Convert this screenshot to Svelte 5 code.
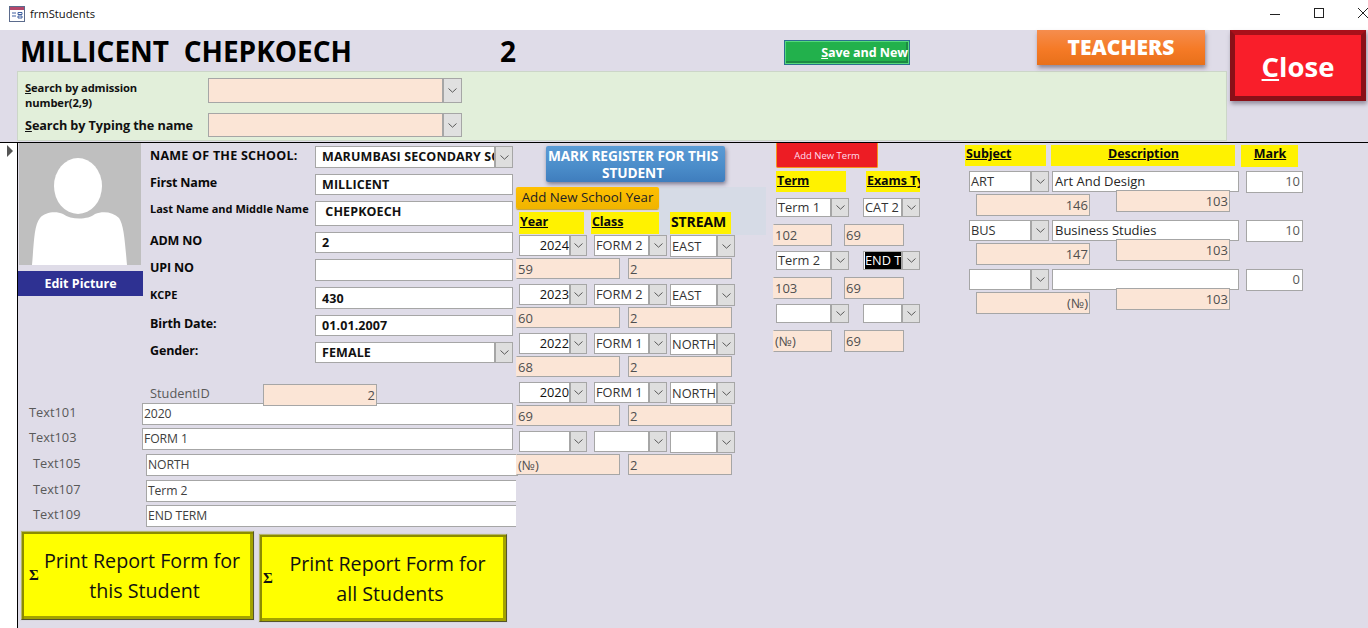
<script>
  const box = (x, y, w, h) => `left:${x}px;top:${y - 143}px;width:${w}px;height:${h}px`;

  const labels = [
    { t: 'NAME OF THE SCHOOL:', x: 150, y: 146, c: 'lb cap' },
    { t: 'First Name', x: 150, y: 173, c: 'lb' },
    { t: 'Last Name and Middle Name', x: 150, y: 199, c: 'lb sm' },
    { t: 'ADM NO', x: 150, y: 231, c: 'lb' },
    { t: 'UPI NO', x: 150, y: 258, c: 'lb' },
    { t: 'KCPE', x: 150, y: 285, c: 'lb sm' },
    { t: 'Birth Date:', x: 150, y: 314, c: 'lb' },
    { t: 'Gender:', x: 150, y: 341, c: 'lb' },
    { t: 'StudentID', x: 150, y: 383, c: 'gl' },
    { t: 'Text101', x: 29, y: 402, c: 'gl' },
    { t: 'Text103', x: 29, y: 427, c: 'gl' },
    { t: 'Text105', x: 33, y: 453, c: 'gl' },
    { t: 'Text107', x: 33, y: 479, c: 'gl' },
    { t: 'Text109', x: 33, y: 504, c: 'gl' }
  ];

  const whites = [
    { t: 'MILLICENT', x: 315, y: 174, w: 198, h: 21, c: 'strong' },
    { t: '\u00a0CHEPKOECH', x: 315, y: 201, w: 198, h: 25, c: 'strong top' },
    { t: '2', x: 315, y: 232, w: 198, h: 21, c: 'strong' },
    { t: '', x: 315, y: 259, w: 198, h: 22, c: 'strong' },
    { t: '430', x: 315, y: 287, w: 198, h: 22, c: 'strong' },
    { t: '01.01.2007', x: 315, y: 315, w: 198, h: 21, c: 'strong' },
    { t: '2020', x: 142, y: 403, w: 371, h: 22, c: 'dim' },
    { t: 'FORM 1', x: 142, y: 428, w: 371, h: 22, c: 'dim' },
    { t: 'NORTH', x: 146, y: 454, w: 372, h: 22, c: 'dim' },
    { t: 'Term 2', x: 146, y: 480, w: 370, h: 22, c: 'dim open' },
    { t: 'END TERM', x: 146, y: 505, w: 370, h: 22, c: 'dim open' },
    { t: 'Art And Design', x: 1052, y: 171, w: 187, h: 21, c: 'dark' },
    { t: 'Business Studies', x: 1052, y: 220, w: 187, h: 21, c: 'dark' },
    { t: '', x: 1052, y: 269, w: 187, h: 21, c: 'dark' },
    { t: '10', x: 1246, y: 171, w: 57, h: 22, c: 'dark right' },
    { t: '10', x: 1246, y: 220, w: 57, h: 22, c: 'dark right' },
    { t: '0', x: 1246, y: 269, w: 57, h: 22, c: 'dark right' }
  ];

  const yearRows = [
    { y: 235, year: '2024', cls: 'FORM 2', st: 'EAST', id: '59' },
    { y: 284, year: '2023', cls: 'FORM 2', st: 'EAST', id: '60' },
    { y: 333, year: '2022', cls: 'FORM 1', st: 'NORTH', id: '68' },
    { y: 382, year: '2020', cls: 'FORM 1', st: 'NORTH', id: '69' },
    { y: 431, year: '', cls: '', st: '', id: '(№)' }
  ];

  const termRows = [
    { y: 198, term: 'Term 1', exam: 'CAT 2', id: '102', sel: false },
    { y: 251, term: 'Term 2', exam: 'END T', id: '103', sel: true },
    { y: 304, term: '', exam: '', id: '(№)', sel: false }
  ];

  const subjectRows = [
    { y: 171, s: 'ART', id: '146' },
    { y: 220, s: 'BUS', id: '147' },
    { y: 269, s: '', id: '(№)' }
  ];

  const heads = [
    { t: 'Year', x: 519, y: 212, w: 65, h: 22 },
    { t: 'Class', x: 591, y: 212, w: 68, h: 22 },
    { t: 'STREAM', x: 670, y: 212, w: 61, h: 22, plain: true },
    { t: 'Term', x: 776, y: 171, w: 70, h: 21 },
    { t: 'Exams Ty', x: 866, y: 171, w: 54, h: 21 },
    { t: 'Subject ', x: 965, y: 145, w: 81, h: 21, up: true },
    { t: 'Description', x: 1051, y: 145, w: 184, h: 21, center: true, up: true },
    { t: 'Mark', x: 1241, y: 145, w: 57, h: 22, center: true, up: true }
  ];
</script>

{#snippet chevron()}
  <svg width="9" height="5" viewBox="0 0 9 5" aria-hidden="true"><path d="M0.5 0.5 L4.5 4.2 L8.5 0.5" fill="none" stroke="#595959" stroke-width="1"/></svg>
{/snippet}

{#snippet combo(x, y, w, h, text, extra = '', btn = 18)}
  <div class="combo {extra}" style={box(x, y, w, h)}>
    <span class="combo-text">{text}</span>
    <span class="combo-btn" style="width:{btn}px">{@render chevron()}</span>
  </div>
{/snippet}

{#snippet peach(x, y, w, h, text, right = false, noleft = false)}
  <div class="peach" class:right class:noleft style={box(x, y, w, h)}>{text}</div>
{/snippet}

<div class="window">
  <header class="titlebar">
    <svg class="appicon" width="17" height="16" viewBox="0 0 17 16" aria-hidden="true">
      <rect x="0.5" y="0.5" width="15" height="15" fill="#fff" stroke="#5b6b8c"/>
      <rect x="1" y="1" width="14" height="3" fill="#b4476b"/>
      <path d="M3 7h4M3 10h4M9 6.5h4v2h-4zM9 10h4v2h-4z" fill="none" stroke="#3f5f9f"/>
    </svg>
    <span class="wintitle">frmStudents</span>
    <div class="winctl">
      <svg width="12" height="12" viewBox="0 0 12 12" aria-hidden="true"><path d="M1 7.5h10" stroke="#222" fill="none"/></svg>
      <svg width="12" height="12" viewBox="0 0 12 12" aria-hidden="true"><rect x="1.5" y="1.5" width="9" height="9" stroke="#222" fill="none"/></svg>
      <svg width="12" height="12" viewBox="0 0 12 12" aria-hidden="true"><path d="M1 1l10 10M11 1L1 11" stroke="#222" fill="none"/></svg>
    </div>
  </header>

  <section class="formhead">
    <div class="titlerow">
      <span class="student">MILLICENT&nbsp; CHEPKOECH</span>
      <span class="studentno">2</span>
    </div>
    <div class="searchpanel">
      <label class="s1" for="a"><u>S</u>earch by admission number(2,9)</label>
      <div id="a" class="searchcombo"><span></span><i>{@render chevron()}</i></div>
      <label class="s2" for="b"><u>S</u>earch by Typing the name</label>
      <div id="b" class="searchcombo"><span></span><i>{@render chevron()}</i></div>
    </div>
    <button class="save"><u>S</u>ave and New</button>
    <button class="teachers">TEACHERS</button>
    <button class="close"><u>C</u>lose</button>
  </section>

  <section class="detail">
    <div class="selector"><span class="tri"></span></div>
    <div class="canvas">
      <svg class="photo" style={box(19, 143, 122, 122)} viewBox="0 0 122 122" aria-hidden="true">
        <rect width="122" height="122" fill="#bfbfbf"/>
        <ellipse cx="59" cy="43" rx="24" ry="28" fill="#fff"/>
        <path d="M13 122 C15 100 15 82 21 75 C26 69 37 68 44 71 C52 77 69 77 76 71 C84 68 94 69 100 75 C105 82 106 100 108 122 Z" fill="#fff"/>
      </svg>
      <button class="edit" style={box(18, 271, 125, 25)}>Edit Picture</button>

      {#each labels as l}
        <div class={l.c} style={box(l.x, l.y, 170, 20)}>{l.t}</div>
      {/each}

      {@render combo(315, 146, 198, 22, 'MARUMBASI SECONDARY SCHOOL', 'strongc up')}
      {@render combo(315, 342, 198, 21, 'FEMALE', 'strongc')}

      <div class="bluepanel" style={box(659, 187, 107, 48)}></div>
      <button class="mark" style={box(546, 146, 179, 36)}>MARK REGISTER FOR THIS STUDENT</button>
      <button class="addyear" style={box(516, 187, 143, 22)}>Add New School Year</button>
      <button class="addterm" style={box(776, 143, 102, 25)}>Add New Term</button>

      {#each heads as h}
        <div class="head" class:center={h.center} class:plain={h.plain} class:up={h.up} style={box(h.x, h.y, h.w, h.h)}>
          {#if h.plain}{h.t}{:else}<u>{h.t}</u>{/if}
        </div>
      {/each}

      {#each whites as f}
        <div class="white {f.c}" style={box(f.x, f.y, f.w, f.h)}>{f.t}</div>
      {/each}

      {@render peach(263, 384, 114, 22, '2', true)}

      {#each yearRows as r}
        {@render combo(519, r.y, 68, 21, r.year, 'rt', 17)}
        {@render combo(594, r.y, 73, 21, r.cls)}
        {@render combo(670, r.y, 65, 22, r.st)}
        {@render peach(516, r.y + 23, 104, 21, r.id, false, true)}
        {@render peach(628, r.y + 23, 104, 21, '2')}
      {/each}

      {#each termRows as r}
        {@render combo(776, r.y, 73, 19, r.term)}
        {@render combo(863, r.y, 57, 19, r.exam, r.sel ? 'sel' : '')}
        {@render peach(773, r.y + 26, 59, 22, r.id, false, true)}
        {@render peach(844, r.y + 26, 60, 22, '69')}
      {/each}

      {#each subjectRows as r}
        {@render combo(969, r.y, 80, 21, r.s)}
        {@render peach(976, r.y + 23, 114, 22, r.id, true)}
        {@render peach(1116, r.y + 19, 114, 22, '103', true)}
      {/each}

      <button class="print" style={box(21, 531, 233, 89)}>
        <span class="sigma">Σ</span>
        <span class="ptext">Print Report Form for<br /><span class="l2">this Student</span></span>
      </button>
      <button class="print" style={box(259, 534, 248, 88)}>
        <span class="sigma s2nd">Σ</span>
        <span class="ptext">Print Report Form for<br /><span class="l2">all Students</span></span>
      </button>
    </div>
  </section>
</div>

<style>
  :global(body) { margin: 0; background: #dfdce8; }
  .window {
    width: 1368px; height: 628px; overflow: hidden; display: flex; flex-direction: column;
    font-family: "Open Sans", "Noto Sans", sans-serif; color: #000; background: #dfdce8;
  }
  .titlebar { height: 30px; flex: none; background: #fff; display: flex; align-items: center; padding-left: 9px; box-sizing: border-box; }
  .appicon { margin-top: -2px; }
  .wintitle { margin-left: 4px; font-size: 11.2px; color: #111; margin-top: -3px; }
  .winctl { margin-left: auto; display: flex; gap: 32px; margin-right: -1px; margin-top: -4px; }

  .formhead { position: relative; height: 113px; flex: none; box-sizing: border-box; border-bottom: 1px solid #000; background: #dfdce8; }
  .titlerow { height: 41px; position: relative; }
  .student { position: absolute; left: 20px; top: 2px; font-size: 28px; font-weight: 700; line-height: 38px; white-space: pre; }
  .studentno { position: absolute; left: 500px; top: 2px; font-size: 28px; font-weight: 700; line-height: 38px; }
  .searchpanel {
    margin-left: 17px; width: 1210px; height: 70px; box-sizing: border-box; background: #e2efda; border: 1px solid #ccd6c8;
    display: grid; grid-template-columns: 183px 254px; grid-template-rows: 25px 24px; row-gap: 10px; padding: 6px 0 0 7px; align-items: center;
  }
  .searchpanel label { font-weight: 700; color: #111; }
  .s1 { font-size: 11.2px; line-height: 15px; width: 150px; margin-top: 8px; letter-spacing: -.1px; }
  .s2 { font-size: 12.7px; line-height: 18px; letter-spacing: -.1px; }
  .searchcombo { height: 100%; box-sizing: border-box; border: 1.5px solid #a6a6a6; background: #fbe5d6; display: flex; justify-content: flex-end; }
  .searchcombo i { width: 17px; background: #e0e0e0; border-left: 2px solid #a6a6a6; display: flex; align-items: center; justify-content: center; }
  button { font-family: inherit; padding: 0; margin: 0; cursor: default; box-sizing: border-box; }
  .save {
    position: absolute; left: 784px; top: 10px; width: 126px; height: 25px; background: #22b14c; color: #fff; font-weight: 700; font-size: 12.6px;
    border: 1px solid #2c6f8f; box-shadow: inset 0 0 0 1px #55d97a, inset -2px -2px 0 1px #1c8a44; text-align: right; padding-right: 1px; letter-spacing: -.1px;
  }
  .teachers {
    position: absolute; left: 1037px; top: 0; width: 168px; height: 35px; border: 0; color: #fff; font-weight: 800; font-size: 21px; padding-bottom: 2px;
    background: linear-gradient(#f58d4e, #f57a26 55%, #e8701a); box-shadow: 1px 3px 4px rgba(80, 70, 90, .55);
  }
  .close {
    position: absolute; left: 1230px; top: 0; width: 136px; height: 71px; color: #fff; font-weight: 700; font-size: 27.5px; padding-top: 2px;
    background: #f91e2a; border: 5px solid; border-color: #a8101a #8a1018 #8a1018 #8a1018; box-shadow: 1px 3px 4px rgba(80, 70, 90, .5);
  }

  .detail { flex: 1; display: flex; position: relative; min-height: 0; }
  .selector { width: 17px; flex: none; border-right: 1px solid #000; background: #fff; height: 100%; box-sizing: content-box; }
  .tri { display: block; margin: 2px 0 0 7px; width: 0; height: 0; border-left: 6px solid #555; border-top: 6px solid transparent; border-bottom: 6px solid transparent; }
  .canvas { position: absolute; left: 0; top: 0; right: 0; bottom: 0; }
  .canvas > * { position: absolute; box-sizing: border-box; }

  .edit { background: #2e3192; color: #fff; border: 0; font-weight: 700; font-size: 12.5px; }
  .lb { font-weight: 700; font-size: 12.5px; line-height: 20px; color: #0a0a0a; white-space: nowrap; letter-spacing: -.15px; }
  .lb.cap { letter-spacing: .25px; }
  .lb.sm { font-size: 11px; letter-spacing: 0; }
  .gl { font-size: 12.8px; line-height: 20px; color: #595959; white-space: nowrap; }

  .white { background: #fff; border: 1.5px solid #a6a6a6; padding: 0 2px; font-size: 12.5px; display: flex; align-items: center; white-space: nowrap; overflow: hidden; }
  .white.strong { font-weight: 700; font-size: 12.5px; padding-left: 6px; color: #111; letter-spacing: .1px; }
  .white.top { align-items: flex-start; padding-top: 1px; }
  .white.dim { color: #404040; letter-spacing: -.1px; font-size: 12.2px; padding-left: 1px; padding-bottom: 2px; }
  .white.open { border-right: 0; }
  .white.dark { font-size: 13px; color: #262626; letter-spacing: 0; padding-bottom: 2px; }
  .white.right { justify-content: flex-end; color: #595959; padding-right: 2px; }

  .combo { display: flex; background: #fff; border: 1.5px solid #a6a6a6; font-size: 12.8px; color: #333; overflow: hidden; }
  .combo-text { flex: 1; min-width: 0; padding: 0 0 0 1px; white-space: nowrap; overflow: hidden; line-height: 17px; align-self: center; }
  .combo-btn { flex: none; background: #dedede; border-left: 2px solid #a6a6a6; display: flex; align-items: center; justify-content: center; box-sizing: border-box; }
  .combo.rt .combo-text { text-align: right; color: #111; }
  .combo.strongc { font-weight: 700; font-size: 12.5px; color: #111; }
  .combo.strongc .combo-text { padding-left: 6px; letter-spacing: .1px; }
  .combo.up .combo-text { margin-bottom: 2px; }
  .combo.sel .combo-text { flex: none; width: 36px; margin-left: 1px; padding: 0; background: #000; color: #fff; }
  .combo.sel { justify-content: space-between; }
  .combo.sel .combo-btn { margin-left: auto; }

  .peach { background: #fbe5d6; border: 1px solid #a6a6a6; font-size: 13px; color: #4f4f4f; padding: 0 2px 0 1px; display: flex; align-items: center; white-space: nowrap; }
  .peach.noleft { border-left-color: transparent; }
  .peach.right { justify-content: flex-end; padding-right: 1px; }

  .bluepanel { background: #d6dbe6; }
  .mark {
    background: linear-gradient(#5b9bd5, #4a8cc9 60%, #3f7dbd); color: #fff; border: 0; border-radius: 2px; font-weight: 700; font-size: 13.7px; line-height: 17px;
    box-shadow: 1px 2px 4px rgba(50, 50, 80, .6); padding: 0 5px 0 0; letter-spacing: -.1px;
  }
  .addyear { background: linear-gradient(#ffc000, #f0b400); color: #222; border: 0; border-radius: 2px; font-size: 13.3px; padding-bottom: 2px; box-shadow: 0 1px 1px #c9a22a; }
  .addterm { background: #ed1c24; color: #fde; border: 1px solid #f7941d; border-top: 0; font-size: 9.5px; border-radius: 0 0 2px 2px; }
  .head { background: #fff200; font-weight: 700; font-size: 12.5px; line-height: 20px; color: #0a0a0a; padding-left: 1px; white-space: nowrap; overflow: hidden; letter-spacing: -.1px; }
  .head.center { text-align: center; }
  .head.plain { font-size: 14px; }
  .head.up { line-height: 18px; }

  .print {
    background: #ffff00; border: 1px solid #b5b56a; border-right-color: #55552c; border-bottom-color: #55552c;
    box-shadow: inset 1px 1px 0 1px #8c8c00, inset -2px -2px 0 1px #a3a300, 0 0 0 1px #d8d6e0;
    color: #111; font-size: 19.7px; line-height: 30px; font-weight: 400; padding-top: 1px;
  }
  .ptext { display: block; text-align: center; padding-left: 15px; padding-right: 6px; white-space: nowrap; }
  .l2 { padding-left: 5px; }
  .sigma { position: absolute; left: 7px; top: 37px; font-family: "Liberation Serif", serif; font-weight: 700; font-size: 15px; line-height: 12px; }
  .sigma.s2nd { left: 3px; }
</style>
